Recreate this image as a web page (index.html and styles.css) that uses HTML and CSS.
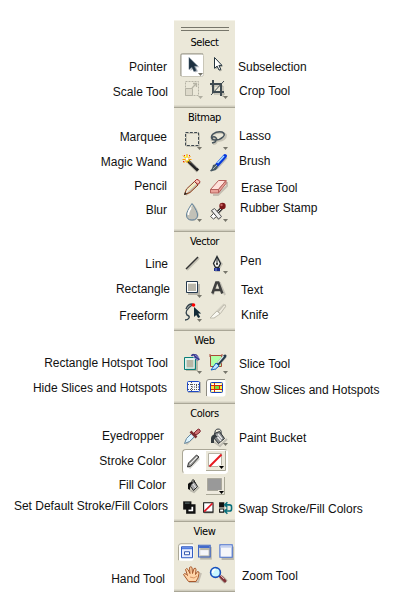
FILE: index.html
```html
<!DOCTYPE html>
<html lang="en">
<head>
<meta charset="utf-8">
<title>Tools panel</title>
<link rel="stylesheet" href="styles.css">
</head>
<body>
<svg class="defs" aria-hidden="true">
  <defs>
    <symbol id="more" viewBox="0 0 5 3"><path d="M0 0H5L2.5 3Z" fill="#77766b"/></symbol>
    <linearGradient id="wood" x2="1" y2="1"><stop stop-color="#ffe46a"/><stop offset="1" stop-color="#ef7a16"/></linearGradient>
    <linearGradient id="water" x2="1" y2="1"><stop stop-color="#f7fcff"/><stop offset="1" stop-color="#688ca8"/></linearGradient>
    <linearGradient id="pane" x2="1" y2="1"><stop stop-color="#a9ced9"/><stop offset="1" stop-color="#fff"/></linearGradient>
    <linearGradient id="spot" x2="1" y2="1"><stop stop-color="#5ff2ef"/><stop offset="1" stop-color="#e8ffff"/></linearGradient>
  </defs>
</svg>
<main class="chart">
  <ul class="labels left">
    <li>Pointer</li><li>Scale Tool</li><li>Marquee</li><li>Magic Wand</li><li>Pencil</li><li>Blur</li><li>Line</li><li>Rectangle</li><li>Freeform</li><li>Rectangle Hotspot Tool</li><li>Hide Slices and Hotspots</li><li>Eyedropper</li><li>Stroke Color</li><li>Fill Color</li><li>Set Default Stroke/Fill Colors</li><li>Hand Tool</li>
  </ul>
  <div class="panel">
    <section class="select">
      <div class="grip"></div>
      <h2>Select</h2>
      <div class="tools">
        <svg viewBox="179 53 27 25"><rect x="180.500" y="53.500" width="23" height="23" rx="2" fill="#fff" stroke="#c9c6b8"/><path d="M181 76V55q0-1 1-1h21" fill="none" stroke="#9b998b"/><path d="M190.500 59v12l3-2.500 2 4 2.500-1.200-2-4h3.500z" fill="#b8bcc2"/><path d="M189 57.500v12l2.900-2.500 2 4.500 2.300-1-2-4.500h3.300z" fill="#1d3040" stroke="#42596a" stroke-width=".5"/><use href="#more" x="198" y="73" width="5" height="3"/></svg>
        <svg viewBox="206 53 27 25"><path d="M215.500 59v10.500l2.500-2 1.900 4 2-1-2-3.500h3z" fill="#aaa99e"/><path d="M214.500 57.500v10.800l2.600-2.200 1.900 4 1.800-.8-1.900-3.900h3.100z" fill="#fff" stroke="#23333d"/></svg>
        <svg viewBox="179 78 27 25"><g fill="none" stroke="#b5b3a5"><path d="M185.500 81.500h13v14h-13z" stroke-dasharray="2 1"/><path d="M185.500 88.500h7v7h-7z" fill="#ddd9ca"/><path d="M192 88l4-4M193 83.500h3.500V87" stroke-width="1.300"/></g><use href="#more" x="198" y="96" width="5" height="3" opacity=".5"/></svg>
        <svg viewBox="206 78 27 25"><g fill="none" stroke="#aaa99e"><path d="M214 83v11h11M211 86h12v11"/></g><g fill="none" stroke="#3f4b51" stroke-width="2"><path d="M213 80v12h11M210 84h11v12"/></g><path d="M211 95l13-14" stroke="#3f4b51"/><use href="#more" x="223" y="96" width="5" height="3"/></svg>
      </div>
    </section>
    <section class="bitmap">
      <h2>Bitmap</h2>
      <div class="tools">
        <svg viewBox="179 128 27 24"><path d="M186.500 133.500h13v13h-13z" fill="none" stroke="#c6c3b5"/><path d="M185.500 132.500h13v13h-13z" fill="none" stroke="#3d474e" stroke-dasharray="3 1.330"/><use href="#more" x="197" y="147" width="5" height="3"/></svg>
        <svg viewBox="206 128 27 24"><g fill="none"><path d="M212 141q-2-7 5-8t9 2q0 5-8 6-5 0-4-3 3-1 3 2 0 4-4 4" stroke="#c6c3b5" stroke-width="2"/><path d="M213 140q-3-3 0-6 4-3 9-2 4 2 1 5-3 3-8 3-3 0-3-2 1-2 3-1 3 2 0 5l-3 1" stroke="#46535b" stroke-width="1.500"/></g><use href="#more" x="223" y="147" width="5" height="3"/></svg>
        <svg viewBox="179 152 27 24"><path d="M189 162l9 9" stroke="#bdb9aa" stroke-width="4"/><path d="M187.500 160.500l10.500 10" stroke="#222" stroke-width="3"/><path d="M188 159.500l9 8.500" stroke="#777"/><path d="M187 154v9M183 155.500l7 7M182.500 159.500h9M183.500 163l7-7" stroke="#fc9900"/><path d="M187 155v7M184 156l5 5" stroke="#fff500"/><circle cx="187" cy="159" r="1.500" fill="#fff"/><path d="M184 155.500h1m4 0h1m-7 6h1" stroke="#e81d17"/></svg>
        <svg viewBox="206 152 27 24"><path d="M216 168l10-11" stroke="#b3b6b7" stroke-width="4"/><path d="M217 165l8-9" stroke="#0738dc" stroke-width="4" stroke-linecap="round"/><path d="M217.500 163l6.500-7" stroke="#a7dcff" stroke-width="1.500"/><path d="M213 165l3-1 2 3-2 3-5 1.500-1-1q2-1 3-5.500z" fill="#495a63"/><path d="M213 169l4-4" stroke="#9fb2bc"/></svg>
        <svg viewBox="179 176 27 24"><path d="M186 195l14-13" stroke="#c6b9a8" stroke-width="2"/><path d="M184.500 194.500l2-5.500 8-7.500 3.500 3.500-8 7.500z" fill="url(#wood)" stroke="#8c3b15"/><path d="M184 195l1-3 2 2z" fill="#222"/><path d="M194.500 181.500l2-2q2-.5 3.300 2 .2 1-1.800 3z" fill="#fac2b5" stroke="#a02726"/><path d="M188 190l7-6.500" stroke="#fff49b"/></svg>
        <svg viewBox="206 176 27 24"><path d="M213 195h5l9-9v-4" fill="none" stroke="#c4beb2" stroke-width="2"/><path d="M210.500 189.500l8-9h7.500l-7.500 9z" fill="#ffe1da" stroke="#b5605c"/><path d="M210.500 189.500h8v3.500h-8zM218.500 189.500l7.500-9v3l-7.500 9.500z" fill="#e9a39a" stroke="#b5605c"/></svg>
        <svg viewBox="179 200 27 27"><path d="M193.500 204q6 8 5 12-2 5-6 5-5 0-6-5" fill="#c2c1b7"/><path d="M192 203.500q-5.500 8-5.500 11.500 0 5 5.500 5t5.500-5q0-3.500-5.500-11.500z" fill="url(#water)" stroke="#61819a"/><path d="M191 208q-3 4-2.500 7" stroke="#fff" fill="none" stroke-width="1.500"/><use href="#more" x="197" y="219" width="5" height="3"/></svg>
        <svg viewBox="206 200 27 27"><path d="M212 210l8 9M213 218l8-9" stroke="#bcb9af" stroke-width="4"/><path d="M216 214l7-7" stroke="#333" stroke-width="3"/><path d="M216 214l6-6" stroke="#ddd"/><circle cx="222.500" cy="206" r="3.200" fill="#7d1718"/><circle cx="221.500" cy="205" r="1.200" fill="#c86766"/><path d="M211.500 210.500l3-2 7 8-3 2.500z" fill="#eee" stroke="#555"/><path d="M210.500 216.500l3-3 3 3-3 2.500z" fill="#fff" stroke="#555"/><use href="#more" x="223" y="219" width="5" height="3"/></svg>
      </div>
    </section>
    <section class="vector">
      <h2>Vector</h2>
      <div class="tools">
        <svg viewBox="179 251 27 25"><path d="M187 270l12-12" stroke="#c4c1b4" stroke-width="2"/><path d="M186 269l12-12" stroke="#333" stroke-width="1.500"/></svg>
        <svg viewBox="206 251 27 25"><path d="M218 257l5 7-3 5v3h-5" fill="#c5c3b7"/><path d="M217 256.500l-3.500 7 2 4h3l2-4z" fill="#f5f5f1" stroke="#20262b" stroke-width="1.300"/><path d="M217 257v7" stroke="#20262b"/><circle cx="217" cy="264" r="1" fill="#222"/><path d="M214 268h6v3h-6z" fill="#1b2b84"/><path d="M216 268v3" stroke="#8798df"/><use href="#more" x="223" y="271" width="5" height="3"/></svg>
        <svg viewBox="179 276 27 25"><path d="M188 284h12v11h-12z" fill="#b9b6aa"/><path d="M186.500 281.500h11v11h-11z" fill="url(#pane)" stroke="#24384d"/><path d="M187.500 282.500h9v9h-9z" fill="none" stroke="#fff"/><use href="#more" x="197" y="295" width="5" height="3"/></svg>
        <svg viewBox="206 276 27 25"><path id="letter" d="M213 295l4-12h3l5 12" stroke="#c6c3b8" stroke-width="2" fill="none"/><path d="M212.300 293.500l4-11h2l4 11M214 290h7" fill="none" stroke="#40403f" stroke-width="2.500"/></svg>
        <svg viewBox="179 301 27 25"><path d="M186 309q2-5 6-5l2 1M192 305q-8 6-5 10 3 1 2 3-1 2-4 2" fill="none" stroke="#34434c" stroke-width="1.400"/><path d="M194 307v10l2.200-2 2 3 2-1-2-3.500h3z" fill="#132b38"/><circle cx="193.500" cy="305" r="1.800" fill="#f00"/><use href="#more" x="197" y="319" width="5" height="3"/></svg>
        <svg viewBox="206 301 27 25"><path d="M213 317l12-12" stroke="#d2cfc2" stroke-width="4"/><path d="M218 312l6-7q2-1 1.500 1.500l-5 7z" fill="#eeeade" stroke="#c0bdaf"/><path d="M217 311l3 3-6 4h-4z" fill="#f9f9f2" stroke="#bfbcae"/></svg>
      </div>
    </section>
    <section class="web">
      <h2>Web</h2>
      <div class="tools">
        <svg viewBox="179 351 27 25"><path d="M186 360h12v11h-12z" fill="#b8b7a6"/><path d="M184.500 357.500h11v12h-11z" fill="url(#spot)" stroke="#087f79"/><path d="M186 359h8v9h-8z" fill="none" stroke="#d8ffff"/><g fill="none" stroke-width="1.800"><path d="M191.500 356q2-3 4 1t3 2M194 355q3-1 5 5" stroke="#38378d"/><path d="M193 357l5 3M195 355l4 3" stroke="#9fa3e9" stroke-width=".8"/></g><use href="#more" x="197" y="371" width="5" height="3"/></svg>
        <svg viewBox="206 351 27 25"><path d="M210.500 355.500h11v11h-11z" fill="#afffa7" stroke="#a94936"/><path d="M210 354v3M222 354v3" stroke="#a94936"/><path d="M214 369l11-13" stroke="#aaa99f" stroke-width="4"/><path d="M218 364l7-8" stroke="#263a4a" stroke-width="3" stroke-linecap="round"/><path d="M217.500 363l6-7" stroke="#d9eeee" stroke-width="1.200"/><path d="M216 363l3 3q-3 4-8 4z" fill="#c3e5ff" stroke="#1265c0"/><use href="#more" x="223" y="371" width="5" height="3"/></svg>
        <svg viewBox="179 376 27 24"><path d="M188 382h13v11h-13z" fill="#b6b5ae"/><rect x="187.500" y="381.500" width="12" height="10" rx="1" fill="#f8fafc" stroke="#1d48c7"/><path d="M188 384.500h11M188 389.500h11M191.500 382v9M192 387h7M196.500 385v4" fill="none" stroke="#555" stroke-dasharray="1 1"/></svg>
        <svg viewBox="206 376 27 24"><rect x="206.500" y="379.500" width="19" height="17" rx="2" fill="#fff"/><path d="M206.500 396v-14q0-2.500 2.500-2.500h16" fill="none" stroke="#8e8c81"/><rect x="210.500" y="382.500" width="12" height="10" rx="1" fill="#ffe43d" stroke="#1742bf"/><path d="M211.500 383.500h10v2h-10zM211.500 389.500h10v2h-10z" fill="#fff"/><path d="M215 386h4v3h-4z" fill="#73df45"/><path d="M211 385.500h11M211 389.500h11M214.500 383v9M219.500 385v4" fill="none" stroke="#d62808"/></svg>
      </div>
    </section>
    <section class="colors">
      <h2>Colors</h2>
      <div class="tools">
        <svg viewBox="179 423 27 26"><path d="M186 444l13-13" stroke="#c5c2b7" stroke-width="3"/><path d="M184.500 443.500l2-5 5.500-5.500 3 3-5.500 5.500z" fill="#ddf4ff" stroke="#65869c"/><path d="M190.500 431.500l6 6" stroke="#7b2e31" stroke-width="2.500"/><path d="M194 433l3-3q2-2 3 0t-1 3l-3 2z" fill="#cf7174" stroke="#812a32"/></svg>
        <svg viewBox="206 423 27 26"><path d="M214 442l6 4 7-7" fill="none" stroke="#c0beb4" stroke-width="2"/><path d="M214.500 433.500l5-2 5 7-6 5-5-6z" fill="#86898b" stroke="#292e31"/><path d="M216 435l5 6M218 434l4 5" stroke="#eee" stroke-width="1.300"/><path d="M215 436q-1-7 3-7t3 5" fill="none" stroke="#394046"/><path d="M211 443v-5q1-4 5-3l2 2q-4 0-4 3v3z" fill="#353c40"/><use href="#more" x="223" y="443" width="5" height="3"/></svg>
      </div>
      <div class="stroke-box">
        <svg viewBox="183 450 22 23"><path d="M189 468l10-10" stroke="#d1d1cc" stroke-width="3"/><path d="M187.500 467l1-4 8-8 2.500 2-8 9z" fill="#a7a7a5" stroke="#333"/><path d="M190 464l7-7" stroke="#eee"/></svg>
        <svg viewBox="205 450 22 23"><path d="M206 451h19v19h-19z" fill="#ece9dc"/><path d="M206 470.500h19.500V451" fill="none" stroke="#aaa897"/><path d="M208.500 453.500h13v13h-13z" fill="#fff" stroke="#b5b2a4"/><path d="M209.500 466.500l12-12" stroke="#e71920" stroke-width="2"/><path d="M218 465h7v4h-7z" fill="#ece9dc"/><path d="M219 466h5l-2.500 3z" fill="#000"/></svg>
      </div>
      <div class="tools fill">
        <svg viewBox="179 474 27 23"><path d="M190 490l4 2 5-5" fill="none" stroke="#bbb9ad" stroke-width="2"/><path d="M191.500 482.500l3-1 3 5-4 4-3-4z" fill="#aaa" stroke="#222"/><path d="M193 484l3 4" stroke="#eee"/><path d="M192 484q-1-5 2-4l1 3" fill="none" stroke="#222"/><path d="M188 489v-5q2-3 5-1-3 1-3 7z" fill="#111"/></svg>
        <svg viewBox="206 474 27 23"><path d="M205 477h19v17h-19z" fill="#eeeade"/><path d="M206 494.500h18.500V477" fill="none" stroke="#aaa897"/><path d="M207.500 478.500h14v12h-14z" fill="#999" stroke="#aaa89c"/><path d="M218 490h6v4h-6z" fill="#eeeade"/><path d="M219 491h5l-2.500 3z" fill="#000"/></svg>
      </div>
      <div class="swatches">
        <svg viewBox="182 499 15 17"><path d="M186.500 504.500h6v6h-6z" fill="#fff" stroke="#111" stroke-width="2"/><path d="M183 501h7v7h-7z" fill="#111"/><path d="M184.500 502.500h4" stroke="#566" /></svg>
        <svg viewBox="197 499 17 17"><path d="M201 503h9v9h-9z" fill="#bbb8ac"/><path d="M200.500 501.500h9v9h-9z" fill="#fff" stroke="#111"/><path d="M201 510l8-8" stroke="#e01522" stroke-width="1.600"/></svg>
        <svg viewBox="214 499 17 17"><path d="M216 501h5v5h-5z" fill="#111"/><path d="M216.500 507.500h4v3h-4z" fill="#fff" stroke="#111"/><path d="M221 503.500h5q2 0 2 2v2q0 2-2 2h-4M224 501l-2.500 2.500 2.500 2.500M224 507l-2.500 2.500 2.500 2.500" fill="none" stroke="#096f7c" stroke-width="1.500"/></svg>
      </div>
    </section>
    <section class="view">
      <h2>View</h2>
      <div class="windows">
        <svg viewBox="178 541 19 21"><rect x="178.500" y="542.500" width="15" height="17" rx="2" fill="#fff"/><path d="M178.500 559v-14q0-2.500 2.500-2.500h12" fill="none" stroke="#aaa797"/><path d="M181.500 545.500h11v11h-11z" fill="#e8edff" stroke="#315bc2"/><path d="M182 547h10" stroke="#517ce0" stroke-width="2"/><path d="M184.500 550.500h5v3h-5z" fill="#fff" stroke="#3457af"/></svg>
        <svg viewBox="197 541 18 21"><path d="M200 546h11v12h-11z" fill="#b9b7ab"/><path d="M198.500 544.500h11v11h-11z" fill="url(#pane)" stroke="#3861c3"/><path d="M199 546h10" stroke="#426acb" stroke-width="2"/><path d="M200 549h8v5h-8z" fill="#f5f6fa"/></svg>
        <svg viewBox="215 541 17 21"><path d="M220 546h11v12h-11z" fill="#b9b7ab"/><path d="M218.500 544.500h11v11h-11z" fill="#f6f7fa" stroke="#4971cf"/><path d="M219 546h10" stroke="#c5d1ee" stroke-width="2"/></svg>
      </div>
      <div class="tools">
        <svg viewBox="179 562 27 25"><path d="M189 580h9l3-9" fill="none" stroke="#c5bfb2" stroke-width="2"/><path d="M188.500 579.500l-5-7q1-2 3 0l1 1-2-6q1-2 2.500 0l2 4-.5-6q1.500-1.500 2.500 0l.5 6 1.500-5q2-1 2 1l-.5 5 2-3q2 0 1.500 2-.5 5-3 8z" fill="#ffd4a8" stroke="#a7592d" stroke-width="1"/><path d="M190 575l4 1 3-2" stroke="#d99564" fill="none"/></svg>
        <svg viewBox="206 562 27 25"><path d="M221 575l5 5" stroke="#bbb9ac" stroke-width="5"/><path d="M220 574l5 5" stroke="#813338" stroke-width="3" stroke-linecap="round"/><path d="M220 573l4 4" stroke="#e0b0b2"/><circle cx="215.500" cy="570.500" r="4.900" fill="#c9f7ff" stroke="#1851bd" stroke-width="1.600"/><path d="M212.500 571q0-3 3-4" stroke="#fff" stroke-width="1.600" fill="none"/></svg>
      </div>
    </section>
  </div>
  <ul class="labels right">
    <li>Subselection</li><li>Crop Tool</li><li>Lasso</li><li>Brush</li><li>Erase Tool</li><li>Rubber Stamp</li><li>Pen</li><li>Text</li><li>Knife</li><li>Slice Tool</li><li>Show Slices and Hotspots</li><li>Paint Bucket</li><li>Swap Stroke/Fill Colors</li><li>Zoom Tool</li>
  </ul>
</main>
</body>
</html>
```
FILE: styles.css
```css
* { box-sizing: border-box; }
body { margin: 0; background: #fff; color: #111; }
svg { display: block; }
.defs { display: none; }
.chart { display: grid; grid-template-columns: 174px 61px 165px; height: 600px; overflow: hidden; }

.labels { list-style: none; margin: 0; padding: 60px 0 0; font: 12px/14px "Liberation Sans", Arial, sans-serif; white-space: nowrap; }
.labels li { height: 14px; }
.left { text-align: right; }
.left li { padding-right: 7px; }
.right li { padding-left: 4px; }

.left li:nth-child(2) { margin-top: 11px; padding-right: 6px; }
.left li:nth-child(3) { margin-top: 31px; }
.left li:nth-child(4) { margin-top: 11px; }
.left li:nth-child(5) { margin-top: 10px; }
.left li:nth-child(6) { margin-top: 10px; }
.left li:nth-child(7) { margin-top: 40px; padding-right: 6px; }
.left li:nth-child(8) { margin-top: 11px; padding-right: 4px; }
.left li:nth-child(9) { margin-top: 13px; padding-right: 6px; }
.left li:nth-child(10) { margin-top: 33px; padding-right: 6px; }
.left li:nth-child(11) { margin-top: 11px; }
.left li:nth-child(12) { margin-top: 34px; padding-right: 10px; }
.left li:nth-child(13) { margin-top: 11px; padding-right: 8px; }
.left li:nth-child(14) { margin-top: 10px; padding-right: 8px; }
.left li:nth-child(15) { margin-top: 7px; padding-right: 6px; }
.left li:nth-child(16) { margin-top: 59px; padding-right: 9px; }

.right li:nth-child(1) { padding-left: 3px; }
.right li:nth-child(2) { margin-top: 10px; }
.right li:nth-child(3) { margin-top: 31px; }
.right li:nth-child(4) { margin-top: 11px; }
.right li:nth-child(5) { margin-top: 13px; padding-left: 6px; }
.right li:nth-child(6) { margin-top: 6px; padding-left: 5px; }
.right li:nth-child(7) { margin-top: 39px; padding-left: 5px; }
.right li:nth-child(8) { margin-top: 15px; padding-left: 6px; }
.right li:nth-child(9) { margin-top: 11px; padding-left: 6px; }
.right li:nth-child(10) { margin-top: 35px; }
.right li:nth-child(11) { margin-top: 12px; padding-left: 5px; }
.right li:nth-child(12) { margin-top: 34px; }
.right li:nth-child(13) { margin-top: 57px; padding-left: 3px; }
.right li:nth-child(14) { margin-top: 53px; padding-left: 7px; }

.panel { padding-top: 20px; }
section { background: #ebe8d9; border-bottom: 1px solid #aaa797; box-shadow: inset 0 -1px #d0cdbe, inset 0 -2px #dfdccd; }
h2 { margin: 0; height: 20px; text-align: center; font: 11px/20px "DejaVu Sans Condensed", "DejaVu Sans", sans-serif; letter-spacing: -0.4px; color: #000; }
.select { height: 88px; padding-top: 6px; box-shadow: inset 0 1px #f5f3e9, inset 0 -1px #d0cdbe, inset 0 -2px #dfdccd; }
.grip { height: 5px; margin: 0 6px 0 7px; background: radial-gradient(circle, #77766b 0 0.7px, transparent 0.8px) 0 0 / 2px 3px; }
.select h2 { height: 22px; line-height: 24px; }
.bitmap { height: 124px; }
.vector { height: 99px; }
.vector h2 { height: 19px; }
.web { height: 73px; }
.colors { height: 118px; }
.colors h2 { height: 19px; }
.view { height: 70px; }
.view h2 { height: 19px; }
.tools { display: grid; grid-template-columns: 27px 27px; padding-left: 5px; }
.stroke-box { display: flex; width: 46px; height: 25px; margin-left: 8px; border: 1px solid #fff; border-left-color: #aaa797; border-top-color: #aaa797; border-radius: 4px; background: #fff; }
.swatches { display: flex; padding: 2px 0 0 8px; }
.windows { display: flex; padding-left: 4px; }
```
